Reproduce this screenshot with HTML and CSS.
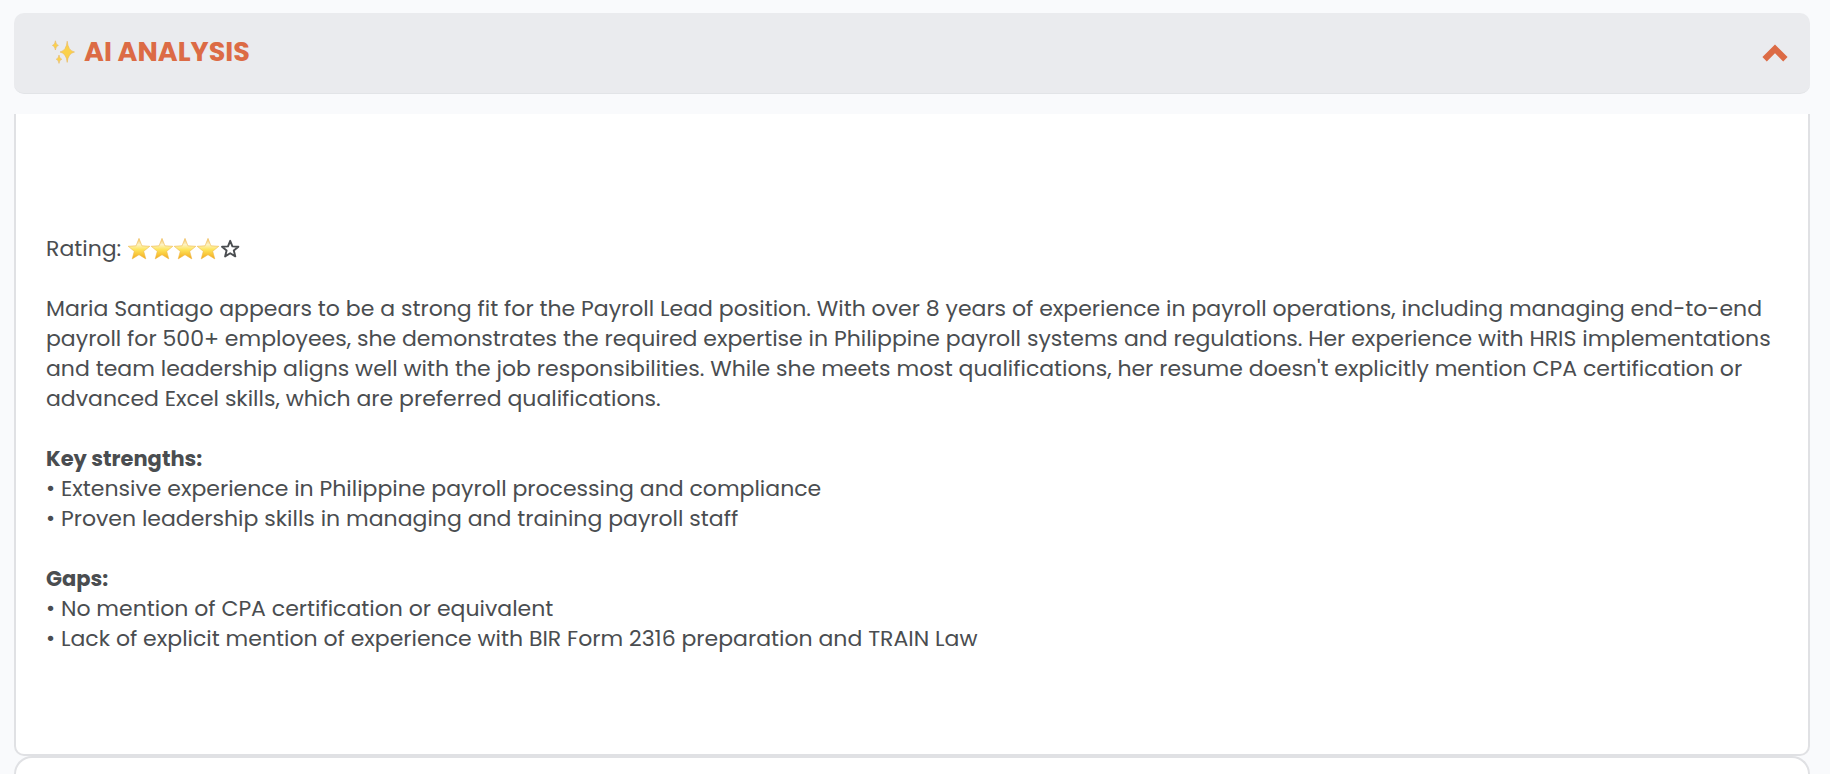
FILE: index.html
```html
<!DOCTYPE html>
<html lang="en">
<head>
    <meta charset="UTF-8">
    <meta name="viewport" content="width=device-width, initial-scale=1.0">
    <title>AI Analysis</title>
    <link rel="stylesheet" href="styles.css">
</head>
<body>
    <!-- Shared star shapes -->
    <svg class="sprite" width="0" height="0" aria-hidden="true">
        <defs>
            <linearGradient id="gold" x1="0" y1="0" x2="0" y2="1">
                <stop offset="0" stop-color="#f3c267"/>
                <stop offset="0.3" stop-color="#fdf3c4"/>
                <stop offset="0.55" stop-color="#fee45a"/>
                <stop offset="1" stop-color="#f3a91c"/>
            </linearGradient>
            <symbol id="star-full" viewBox="0 0 23 23">
                <path d="M11 0.4L13.9 7.8L21.8 8.3L15.7 13.3L17.8 20.9L11 16.7L4.2 20.9L6.3 13.3L0.2 8.3L8.1 7.8Z" fill="url(#gold)" stroke="#efb84c" stroke-width="0.6" stroke-linejoin="round"/>
            </symbol>
            <symbol id="star-empty" viewBox="0 0 23 23">
                <path d="M10.2 2.8L12.4 8.4L18.4 8.8L13.8 12.6L15.3 18.4L10.2 15.2L5.1 18.4L6.6 12.6L2 8.8L8 8.4Z" fill="none" stroke="#4a4d50" stroke-width="1.9" stroke-linejoin="round"/>
            </symbol>
        </defs>
    </svg>

    <button type="button" class="accordion-header" aria-expanded="true" aria-controls="analysis">
        <span class="accordion-title">
            <svg class="sparkles" viewBox="0 0 24 24" aria-hidden="true">
                <path d="M15.2 1.2Q16 10.6 22.5 12Q16 13.4 15.2 22.4Q14.4 13.4 8 12Q14.4 10.6 15.2 1.2Z" fill="#fbd14b" stroke="#e9b961" stroke-width="0.6"/>
                <path d="M3.4 0.8Q3.8 4.8 6.4 5.4Q3.8 6 3.4 10Q3 6 0.4 5.4Q3 4.8 3.4 0.8Z" fill="#fbd14b" stroke="#e9b961" stroke-width="0.6"/>
                <path d="M7 15Q7.4 18.6 9.8 19.2Q7.4 19.8 7 23.4Q6.6 19.8 4.2 19.2Q6.6 18.6 7 15Z" fill="#fbd14b" stroke="#e9b961" stroke-width="0.6"/>
            </svg>
            AI ANALYSIS
        </span>
        <svg class="chevron" viewBox="0 0 26 20" aria-hidden="true">
            <path d="M2.6 17.2L13 6.8L23.4 17.2" fill="none" stroke="#dc6b45" stroke-width="6.2"/>
        </svg>
    </button>

    <section class="analysis" id="analysis">
        <p class="rating">
            Rating:
            <span class="stars" role="img" aria-label="4 out of 5 stars">
                <svg class="star"><use href="#star-full"/></svg>
                <svg class="star"><use href="#star-full"/></svg>
                <svg class="star"><use href="#star-full"/></svg>
                <svg class="star"><use href="#star-full"/></svg>
                <svg class="star"><use href="#star-empty"/></svg>
            </span>
        </p>

        <p>Maria Santiago appears to be a strong fit for the Payroll Lead position. With over 8 years of experience in payroll operations, including managing end-to-end payroll for 500+ employees, she demonstrates the required expertise in Philippine payroll systems and regulations. Her experience with HRIS implementations and team leadership aligns well with the job responsibilities. While she meets most qualifications, her resume doesn't explicitly mention CPA certification or advanced Excel skills, which are preferred qualifications.</p>

        <div>
            <h2>Key strengths:</h2>
            <ul>
                <li>Extensive experience in Philippine payroll processing and compliance</li>
                <li>Proven leadership skills in managing and training payroll staff</li>
            </ul>
        </div>

        <div>
            <h2>Gaps:</h2>
            <ul>
                <li>No mention of CPA certification or equivalent</li>
                <li>Lack of explicit mention of experience with BIR Form 2316 preparation and TRAIN Law</li>
            </ul>
        </div>
    </section>

    <section class="next-card"></section>
</body>
</html>
```
FILE: styles.css
```css
* {
    box-sizing: border-box;
}

body {
    display: flex;
    flex-direction: column;
    min-height: 100vh;
    margin: 0;
    padding: 13px 20px 0 14px;
    background-color: #f9fafc;
    color: #4a4d50;
    font-family: Poppins, Inter, sans-serif;
    font-size: 22px;
    line-height: 30px;
}

h2,
p,
ul {
    margin: 0;
    padding: 0;
}

.sprite {
    position: absolute;
}

.accordion-header {
    display: flex;
    align-items: center;
    justify-content: space-between;
    margin-bottom: 20px;
    padding: 20px 22px 22px 38px;
    border: none;
    border-bottom: 1px solid #e2e4e7;
    border-radius: 10px;
    background-color: #eaebee;
    color: #dc6b45;
    font-family: inherit;
    font-size: 27px;
    font-weight: 700;
    line-height: 38px;
    cursor: pointer;
}

.accordion-title {
    display: flex;
    align-items: center;
    gap: 8px;
}

.sparkles {
    width: 24px;
    height: 24px;
}

.chevron {
    width: 26px;
    height: 20px;
}

/* Analysis text */
.analysis {
    display: flex;
    flex-direction: column;
    gap: 30px;
    padding: 120px 30px 100px;
    border: 2px solid #e0e1e4;
    border-top: none;
    border-radius: 0 0 10px 10px;
    background-color: #fff;
}

.analysis h2 {
    font-size: 21px;
    font-weight: 700;
    line-height: 30px;
}

.analysis ul {
    list-style: none;
}

.analysis li::before {
    content: "• ";
}

.rating,
.stars {
    display: flex;
    align-items: center;
}

.rating {
    gap: 7px;
}

.star {
    width: 23px;
    height: 23px;
}

/* Top of the card that follows */
.next-card {
    flex: 1;
    border: 2px solid #e0e1e4;
    border-bottom: none;
    border-radius: 20px 20px 0 0;
    background-color: #fff;
}
```
